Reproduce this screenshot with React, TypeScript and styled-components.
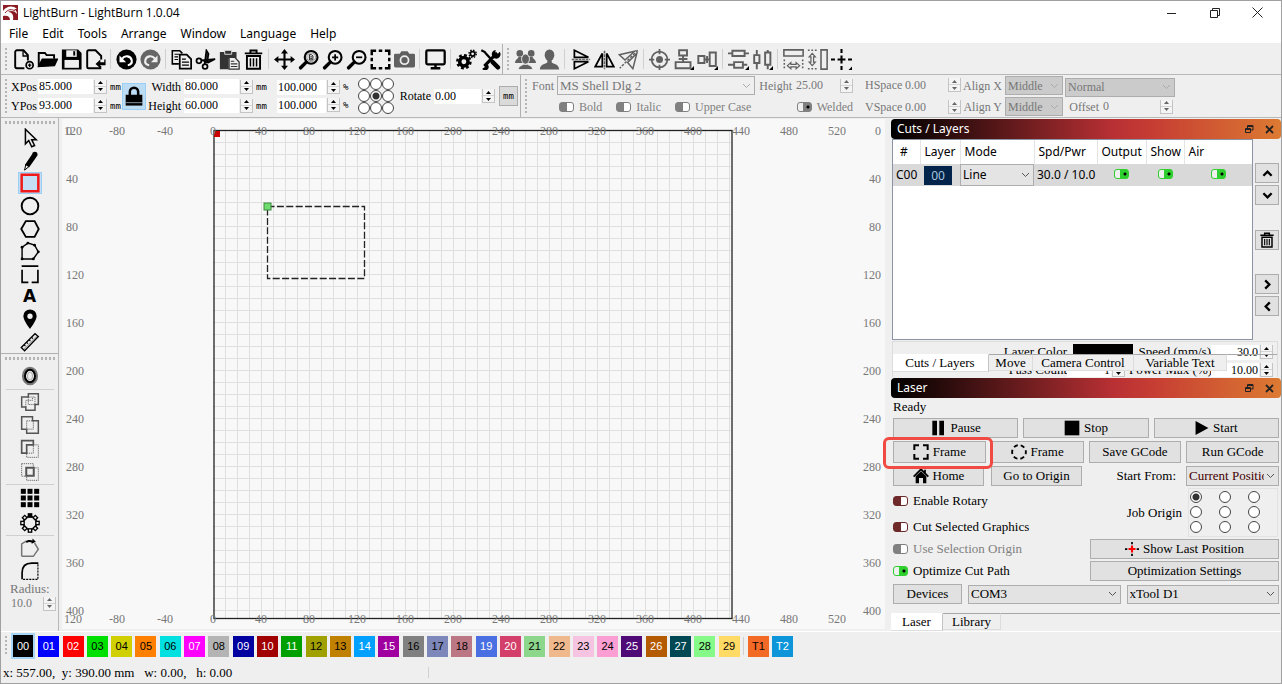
import React from "react";
import styled, { createGlobalStyle, css } from "styled-components";

const UI = `"Noto Sans", "Open Sans", sans-serif`;
const SONG = `"Liberation Serif", "Noto Sans CJK SC", serif`;

const Global = createGlobalStyle`
  * { box-sizing: border-box; }
  body { margin: 0; background: #f0f0f0; color: #000; font: 13px/16px ${SONG}; }
  button, input, select { font: inherit; color: inherit; margin: 0; padding: 0; }
  svg { display: block; }
`;

/* ---------- shell ---------- */

const Window = styled.div`
  min-height: 100vh;
  display: flex;
  flex-direction: column;
  border: 1px solid #a0a0a0;
  background: #efefef;
`;

const TitleBar = styled.header`
  display: flex;
  align-items: center;
  height: 23px;
  padding: 0 2px;
  background: #fff;
`;

const AppTitle = styled.h1`
  flex: 1;
  margin: 0 0 0 5px;
  font: 12px/16px "Open Sans", "Noto Sans", sans-serif;
`;

const CaptionButton = styled.button`
  width: 43px;
  height: 20px;
  display: grid;
  place-items: center;
  border: 0;
  background: none;
`;

const MenuBar = styled.nav`
  display: flex;
  gap: 14px;
  height: 20px;
  padding: 0 8px;
  background: #fff;
  border-bottom: 1px solid #eee;
  font: 12px/20px ${UI};
`;

const MenuLink = styled.a`
  color: #000;
  text-decoration: none;
`;

const ToolRow = styled.div`
  display: flex;
  align-items: center;
  height: 31px;
  border-bottom: 1px solid #b8b8b8;
`;

const Handle = styled.span<{ $flat?: boolean }>`
  flex: none;
  ${(p) =>
    p.$flat
      ? css`
          height: 3px;
          margin: 3px 3px 3px 4px;
          background: repeating-linear-gradient(90deg, #b4b4b4 0 2px, transparent 2px 4px);
        `
      : css`
          width: 2px;
          align-self: stretch;
          margin: 4px;
          background: repeating-linear-gradient(180deg, #b4b4b4 0 2px, transparent 2px 4px);
        `}
`;

const ToolButton = styled.button`
  flex: none;
  width: 24px;
  height: 26px;
  display: grid;
  place-items: center;
  border: 0;
  background: none;
`;

const VRule = styled.span<{ $strong?: boolean }>`
  flex: none;
  width: 1px;
  align-self: stretch;
  margin: ${(p) => (p.$strong ? "0" : "5px 3px")};
  background: ${(p) => (p.$strong ? "#b0b0b0" : "#d0d0d0")};
`;

/* ---------- small controls ---------- */

const Field = styled.label<{ $dim?: boolean }>`
  display: flex;
  align-items: center;
  color: ${(p) => (p.$dim ? "#777" : "#000")};
`;

const FieldName = styled.span<{ $w?: number }>`
  width: ${(p) => (p.$w ? `${p.$w}px` : "auto")};
  text-align: right;
  margin-right: 3px;
  white-space: nowrap;
`;

const NumberBox = styled.input<{ $w: number; $plain?: boolean; $right?: boolean }>`
  width: ${(p) => p.$w}px;
  height: 15px;
  border: 0;
  padding: 0 1px;
  text-align: ${(p) => (p.$right ? "right" : "left")};
  background: ${(p) => (p.$plain ? "transparent" : "#fff")};
  font: 12px/15px ${SONG};
`;

const SpinBox = styled.span`
  flex: none;
  width: 13px;
  height: 14px;
  margin-left: 1px;
  display: flex;
  flex-direction: column;
  border: solid #c4c4c4;
  border-width: 0 1px 1px;
  background: #f4f4f4;
`;

const SpinHalf = styled.button`
  flex: 1;
  display: grid;
  place-items: center;
  border: 0;
  background: none;
  &:first-child { border-bottom: 1px solid #d4d4d4; }
`;

const Unit = styled.span`
  width: 12px;
  margin-left: 3px;
  font: 9px/14px "DejaVu Sans Mono", monospace;
`;

function Spin({ dim }: { dim?: boolean }) {
  const c = dim ? "#666" : "#000";
  return (
    <SpinBox>
      <SpinHalf type="button" aria-label="Increase">
        <svg width="5" height="3"><path d="M2.5 0L5 3H0z" fill={c} /></svg>
      </SpinHalf>
      <SpinHalf type="button" aria-label="Decrease">
        <svg width="5" height="3"><path d="M0 0h5L2.5 3z" fill={c} /></svg>
      </SpinHalf>
    </SpinBox>
  );
}

function NumberField(p: { label: string; value: string; w: number; nameW?: number; unit?: string; dim?: boolean; hideLabel?: boolean }) {
  return (
    <Field $dim={p.dim}>
      {!p.hideLabel && <FieldName $w={p.nameW}>{p.label}</FieldName>}
      <NumberBox $w={p.w} $plain={p.dim} defaultValue={p.value} aria-label={p.label} />
      <Spin dim={p.dim} />
      {p.unit && <Unit>{p.unit}</Unit>}
    </Field>
  );
}

const SelectShell = styled.span<{ $w?: number; $ui?: boolean }>`
  position: relative;
  display: block;
  width: ${(p) => (p.$w ? `${p.$w}px` : "auto")};
  min-width: 0;
  font-family: ${(p) => (p.$ui ? UI : SONG)};
  > svg { position: absolute; right: 4px; top: 50%; margin-top: -3px; pointer-events: none; }
`;

const SelectBox = styled.select<{ $bg?: string; $h?: number; $color?: string; $small?: boolean }>`
  appearance: none;
  width: 100%;
  height: ${(p) => p.$h ?? 19}px;
  padding: 0 14px 0 2px;
  border: 1px solid #adadad;
  border-radius: 0;
  background: ${(p) => p.$bg ?? "#e3e3e3"};
  color: ${(p) => p.$color ?? "#000"};
  font-size: ${(p) => (p.$small ? 12 : 13)}px;
  display: block;
`;

function Select(p: { label: string; value: string; w?: number; bg?: string; h?: number; color?: string; ui?: boolean; small?: boolean }) {
  return (
    <SelectShell $w={p.w} $ui={p.ui}>
      <SelectBox aria-label={p.label} $bg={p.bg} $h={p.h} $color={p.color} $small={p.ui || p.small}>
        <option>{p.value}</option>
      </SelectBox>
      <svg width="9" height="6"><path d="M1 1l3.5 3.5L8 1" fill="none" stroke={p.color === "#777" ? "#aaa" : "#555"} /></svg>
    </SelectShell>
  );
}

const Switch = styled.input<{ $c: string }>`
  appearance: none;
  flex: none;
  width: 15px;
  height: 10px;
  border: 1px solid ${(p) => p.$c};
  border-radius: 3px;
  background: linear-gradient(90deg, ${(p) => p.$c} 0 55%, #fff 55%);
  &:checked {
    background: radial-gradient(circle at 10px 4px, #000 0 1px, transparent 2px),
      linear-gradient(90deg, #efefef 0 40%, ${(p) => p.$c} 40%);
  }
`;

const SwitchLabel = styled.label<{ $dim?: boolean }>`
  display: flex;
  align-items: center;
  gap: 5px;
  white-space: nowrap;
  color: ${(p) => (p.$dim ? "#808080" : "#000")};
`;

const Radio = styled.input`
  appearance: none;
  width: 12px;
  height: 12px;
  border: 1px solid #444;
  border-radius: 50%;
  background: #fff;
  &:checked { background: radial-gradient(circle, #333 0 3px, #fff 4px); }
`;

const RadioGrid = styled.div<{ $gap?: number; $row?: number; $ml?: number }>`
  display: grid;
  grid-template-columns: repeat(3, 12px);
  gap: ${(p) => p.$row ?? 0}px ${(p) => p.$gap ?? 0}px;
  margin-left: ${(p) => p.$ml ?? 0}px;
`;

/* ---------- numeric toolbar ---------- */

const NumericRow = styled.div`
  display: flex;
  align-items: stretch;
  height: 43px;
  border-bottom: 1px solid #b8b8b8;
`;

const Cluster = styled.div`
  display: flex;
  align-items: center;
`;

const Pair = styled.div<{ $ml?: number; $gap?: number }>`
  display: grid;
  gap: ${(p) => p.$gap ?? 3}px;
  margin-left: ${(p) => p.$ml ?? 0}px;
`;

const LockButton = styled.button`
  width: 24px;
  height: 27px;
  display: grid;
  place-items: center;
  border: 1px solid #99cff5;
  background: #bcdcf4;
`;

const UnitButton = styled.button`
  width: 19px;
  height: 20px;
  margin: 0 2px 0 4px;
  border: 1px solid #adadad;
  background: #dadada;
  font: 9px/14px "DejaVu Sans Mono", monospace;
`;

const SwitchRow = styled.div`
  display: flex;
  align-items: center;
  height: 19px;
  gap: 14px;
  padding-left: 28px;
  > :last-child { margin-left: auto; }
`;

/* ---------- body ---------- */

const Body = styled.div`
  flex: 1;
  display: flex;
  min-height: 512px;
`;

const SideTools = styled.aside`
  flex: none;
  width: 58px;
  display: flex;
  flex-direction: column;
  border-right: 1px solid #b8b8b8;
`;

const ToolStack = styled.div<{ $h: number }>`
  display: grid;
  grid-auto-rows: 1fr;
  height: ${(p) => p.$h}px;
  justify-items: center;
  align-items: center;
`;

const SideButton = styled.button<{ $on?: boolean }>`
  width: 24px;
  height: 22px;
  display: grid;
  place-items: center;
  border: ${(p) => (p.$on ? "1px solid #99cff5" : "0")};
  background: ${(p) => (p.$on ? "#c4dff5" : "none")};
`;

const HRule = styled.hr<{ $full?: boolean }>`
  width: ${(p) => (p.$full ? "100%" : "48px")};
  margin: 0 auto;
  border: 0;
  border-top: 1px solid ${(p) => (p.$full ? "#b0b0b0" : "#cfcfcf")};
`;

const RadiusBlock = styled.div`
  padding: 0 2px 0 9px;
  color: #777;
  line-height: 14px;
`;

const Stage = styled.main`
  flex: 1;
  min-width: 0;
  padding: 1px 0 0 3px;
  svg { background: #f8f8f8; }
  text { font: 12px ${SONG}; fill: #777; }
`;

const Dock = styled.section`
  flex: none;
  width: 396px;
  padding: 1px 1px 0 6px;
  display: flex;
  flex-direction: column;
`;

const DockTitle = styled.h2`
  display: flex;
  align-items: center;
  gap: 8px;
  height: 20px;
  margin: 0 -1px 0 0;
  padding: 0 6px;
  border-radius: 4px;
  color: #fff;
  background: linear-gradient(90deg, #000 0, #240a0a 12%, #b83034 57%, #c63d33 67%, #dc7a32 100%);
  font: 12px/20px ${UI};
  > span { flex: 1; }
`;

const BarButton = styled.button`
  width: 12px;
  height: 12px;
  display: grid;
  place-items: center;
  border: 0;
  background: none;
`;

const CutsArea = styled.div`
  display: flex;
  gap: 2px;
  padding-left: 1px;
`;

const TableFrame = styled.div`
  width: 361px;
  height: 201px;
  border: 1px solid #8a94a4;
  background: #fff;
`;

const CutTable = styled.table`
  width: 100%;
  border-collapse: collapse;
  table-layout: fixed;
  font: 12px/16px ${UI};
  th {
    height: 24px;
    padding: 0 0 0 4px;
    font-weight: 400;
    text-align: left;
    border-right: 1px solid #e4e4e4;
  }
  th:last-child { border-right: 0; }
  td { height: 22px; padding: 0 0 0 3px; background: #d9d9d9; white-space: nowrap; }
`;

const Cell = styled.td<{ $flush?: boolean; $mid?: boolean }>`
  && { padding: ${(p) => (p.$flush || p.$mid ? "0" : "0 0 0 3px")}; }
  text-align: ${(p) => (p.$mid ? "center" : "left")};
`;

const LayerChip = styled.button`
  display: block;
  width: 28px;
  height: 19px;
  margin-left: 4px;
  border: 0;
  background: #03244a;
  color: #a8c4dc;
  font: 12px/17px ${UI};
`;

const SideStack = styled.div`
  display: flex;
  flex-direction: column;
  gap: 2px;
  padding-top: 24px;
`;

const SquareButton = styled.button<{ $top?: number }>`
  width: 24px;
  height: 20px;
  margin-top: ${(p) => p.$top ?? 0}px;
  display: grid;
  place-items: center;
  border: 1px solid #adadad;
  background: #e1e1e1;
`;

const LayerSettings = styled.div`
  position: relative;
  height: 36px;
  margin: 1px 2px 1px 1px;
  border: 1px solid #dcdcdc;
  border-bottom: 0;
  overflow: hidden;
`;

const SettingsGrid = styled.div`
  display: grid;
  grid-template-columns: 174px 62px 82px auto;
  row-gap: 2px;
  padding-top: 2px;
  text-align: right;
  > * { height: 16px; white-space: nowrap; }
`;

const ColorBar = styled.button`
  width: 60px;
  margin-left: 6px;
  border: 0;
  background: #000;
`;

const TabStrip = styled.div<{ $over?: boolean }>`
  display: flex;
  align-items: flex-start;
  ${(p) => p.$over && css`position: absolute; left: -1px; right: 0; top: 12px;`}
`;

const BottomTabs = styled(TabStrip)`
  margin: 9px 0 0;
`;

const Tab = styled.button<{ $active?: boolean; $w: number }>`
  flex: none;
  width: ${(p) => p.$w}px;
  height: ${(p) => (p.$active ? 18 : 17)}px;
  border: 0;
  border-right: 1px solid ${(p) => (p.$active ? "#c4c4c4" : "#dcdcdc")};
  border-top: 1px solid ${(p) => (p.$active ? "#fff" : "#a8a8a8")};
  border-bottom: 1px solid #ddd;
  background: ${(p) => (p.$active ? "#fff" : "#efefef")};
  white-space: nowrap;
`;

const TabLine = styled.span`
  flex: 1;
  border-top: 1px solid #a8a8a8;
`;

const LaserBody = styled.div`
  padding: 0 1px 0 2px;
`;

const Ready = styled.p`
  margin: 1px 0 3px;
  line-height: 16px;
`;

const ButtonRow = styled.div<{ $cols: string; $mt?: number; $gap?: number }>`
  display: grid;
  grid-template-columns: ${(p) => p.$cols};
  gap: ${(p) => p.$gap ?? 5}px;
  margin-top: ${(p) => p.$mt ?? 3}px;
  align-items: center;
`;

const PushButton = styled.button<{ $h?: number }>`
  height: ${(p) => p.$h ?? 20}px;
  display: flex;
  align-items: center;
  justify-content: center;
  gap: 4px;
  border: 1px solid #adadad;
  background: #e1e1e1;
  white-space: nowrap;
`;

const Marked = styled.div`
  position: relative;
  display: grid;
  &::after {
    content: "";
    position: absolute;
    inset: -4px -7px -6px -10px;
    border: 3px solid #f14a42;
    border-radius: 6px;
    pointer-events: none;
  }
`;

const Options = styled.div`
  display: grid;
  grid-template-columns: 197px 1fr;
  height: 95px;
`;

const SwitchColumn = styled.div`
  display: grid;
  grid-template-rows: 30px 22px 22px 22px;
`;

const OriginColumn = styled.div`
  display: flex;
  flex-direction: column;
  gap: 2px;
  padding-top: 2px;
`;

const OriginRow = styled.div`
  display: flex;
  align-items: center;
  justify-content: flex-end;
  gap: 6px;
  padding-right: 1px;
`;

const OriginFrame = styled.div`
  width: 90px;
  height: 49px;
  padding: 2px 0 0 1px;
  border: 1px solid #e2e2e2;
`;

/* ---------- bottom ---------- */

const Palette = styled.footer`
  display: flex;
  align-items: center;
  height: 29px;
  border-top: 1px solid #fff;
`;

const Swatches = styled.div`
  display: flex;
  align-items: center;
  justify-content: space-between;
  width: 729px;
`;

const Swatch = styled.button<{ $bg: string; $light?: boolean; $on?: boolean }>`
  flex: none;
  width: ${(p) => (p.$on ? 24 : 21)}px;
  height: ${(p) => (p.$on ? 26 : 21)}px;
  border: ${(p) => (p.$on ? "2px solid #a8d4f6" : "0")};
  background: ${(p) => p.$bg};
  color: ${(p) => (p.$light ? "#fff" : "#000")};
  font: 11px/16px "Liberation Sans", Arial, sans-serif;
`;

const TemplateSwatches = styled.div`
  display: flex;
  gap: 3px;
  margin-left: 1px;
`;

const StatusBar = styled.div`
  display: flex;
  height: 23px;
  align-items: center;
  white-space: pre;
  padding-top: 2px;
  line-height: 18px;
`;

const StatusText = styled.output`
  width: 424px;
  padding-left: 2px;
`;

/* ---------- icons, all on a 24 unit square ---------- */

const G = "#606060";
const I = ({ children, s = 24 }: { children: React.ReactNode; s?: number }) => (
  <svg width={s} height={s} viewBox="0 0 24 24" fill="none" stroke="#000" strokeWidth="2" aria-hidden="true">
    {children}
  </svg>
);

const zoomGlass = (
  <>
    <circle cx="15" cy="9.5" r="7.3" strokeWidth="2.4" />
    <path d="M9.5 15L3 21.5" strokeWidth="4" strokeLinecap="round" />
  </>
);

const icons: Record<string, React.ReactNode> = {
  newFile: <><path d="M13 22H4.500a2 2 0 0 1-2-2V3.500a2 2 0 0 1 2-2H12l5 5.500V13" strokeWidth="2.200" /><path d="M11.500 2v6h5" strokeWidth="1.500" /><circle cx="19" cy="18.500" r="4" /><path d="M19 16.500v4M17 18.500h4" strokeWidth="1.500" /></>,
  open: <><path d="M2 19V4.500h7L11 7h8.500v4" strokeWidth="2.200" /><path d="M1.500 20L6 11.500h17.500L20 19z" fill="#000" strokeWidth="1.400" /></>,
  save: <><path d="M1 .5h18.500L23.500 4.500V23.500H1z" fill="#000" stroke="none" /><path d="M6 1.500h12v7.500H6z" fill="#efefef" stroke="none" /><path d="M14 2.500h2.200v5H14z" fill="#000" stroke="none" /><path d="M4 12.500h16.500v9H4z" fill="#efefef" stroke="none" /></>,
  importFile: <><path d="M18.500 12V8L12 1.500H4A1.500 1.500 0 0 0 2.500 3v17.500A1.500 1.500 0 0 0 4 22h13.500v-2.500" strokeWidth="2.200" /><path d="M12 17l5.500-5v3.200H22V12h1.500v6.500h-6V22z" fill="#000" stroke="none" /></>,
  undo: <><circle cx="12" cy="12" r="11.500" fill="#000" stroke="none" /><path d="M7 11c3-4 10-3.500 11 2 .5 3-1.500 5-4.500 5.500" stroke="#fff" strokeWidth="2.400" /><path d="M4 7.500V15h7.500z" fill="#fff" stroke="none" /></>,
  redo: <><circle cx="12" cy="12" r="11.500" fill="#666" stroke="none" /><path d="M17 11c-3-4-10-3.500-11 2-.5 3 1.500 5 4.500 5.500" stroke="#efefef" strokeWidth="2.400" /><path d="M20 7.500V15h-7.500z" fill="#efefef" stroke="none" /></>,
  copy: <><path d="M9 17H1.500V2H10l3 3" strokeWidth="1.800" /><path d="M4 6h5M4 9h4M4 12h4" strokeWidth="1.400" /><path d="M10 6.500h8l5 5V22.500H10z" strokeWidth="2" fill="#efefef" /><path d="M12.500 11.500H17M12.500 15h8M12.500 18.500h8" strokeWidth="1.500" /></>,
  cut: <><circle cx="4.500" cy="13.500" r="2.800" /><circle cx="11.500" cy="20" r="2.800" /><path d="M7.500 13L23 11.500l-8 4-5-1.500M11 17.500L13 1.500l2.500 4-1.500 8.500" strokeWidth="1.800" fill="#333" /></>,
  paste: <><path d="M1 3.500h19v7h-9V23H1z" fill="#333" stroke="none" /><path d="M6.500 1.500h8V6h-8z" fill="#333" stroke="#efefef" strokeWidth="1" /><path d="M11.500 9.500H18l5 5.500v8H11.500z" fill="#efefef" stroke="#333" strokeWidth="1.500" /><path d="M13.500 14h4M13.500 17h7.500M13.500 20h7.500" stroke="#333" strokeWidth="1.400" /></>,
  trash: <><path d="M2 5h20M8.500 4.500V1.800h7v2.700" strokeWidth="2.200" /><path d="M4.500 8h15v14.500h-15z" strokeWidth="2.200" /><path d="M8.500 10.500v9.500M12 10.500v9.500M15.500 10.500v9.500" strokeWidth="1.700" /></>,
  move: <><path d="M12 3v18M3 12h18" strokeWidth="2.400" /><path d="M12 0l4 5H8zM12 24l4-5H8zM0 12l5-4v8zM24 12l-5-4v8z" fill="#000" stroke="none" /></>,
  zoomPage: <>{zoomGlass}<circle cx="15" cy="9.500" r="5" stroke="#888" strokeWidth="1" /><path d="M13 6.500h2.500L17 8v4.500h-4zM14 9h2M14 11h2" strokeWidth="1" /></>,
  zoomIn: <>{zoomGlass}<path d="M15 6v7M11.500 9.500h7" /></>,
  zoomOut: <>{zoomGlass}<path d="M11.500 9.500h7" /></>,
  marquee: <path d="M2 7V2h5M10 2h4M17 2h5v5M22 10v4M22 17v5h-5M14 22h-4M7 22H2v-5M2 14v-4" strokeWidth="2.800" />,
  camera: <><path d="M1.500 5.500H6.500l2-3h7l2 3h5a1.500 1.500 0 0 1 1.500 1.500v12.500a1.500 1.500 0 0 1-1.500 1.500h-21A1.500 1.500 0 0 1 0 19.500V7a1.500 1.500 0 0 1 1.500-1.500z" fill={G} stroke="none" /><circle cx="12" cy="12.800" r="4.600" stroke="#efefef" strokeWidth="2" /></>,
  monitor: <><rect x="1.500" y="1.500" width="21" height="16" rx="1.500" strokeWidth="2.600" /><path d="M12 17v4M6.500 22h11" strokeWidth="2.800" /></>,
  gears: <><circle cx="9" cy="14.500" r="4.800" strokeWidth="4" /><circle cx="9" cy="14.500" r="7.500" strokeWidth="2.800" strokeDasharray="3.200 2.690" /><circle cx="19" cy="5.500" r="2.600" strokeWidth="2" /><circle cx="19" cy="5.500" r="4.200" strokeWidth="1.500" strokeDasharray="1.700 1.599" /></>,
  tools: <><path d="M19.500 4.500L5 19.500" strokeWidth="3.600" /><path d="M22.500 3a5 5 0 1 1-4.500-2L17 5l2 2z M6.500 16.500a4 4 0 1 1-4 6L5 21z" fill="#000" stroke="none" /><path d="M1.500 1.500l4 2 1.500 2L13 12" strokeWidth="2.600" /><path d="M14.500 15l6 6" strokeWidth="5" strokeLinecap="round" /></>,
  users: <g fill={G} stroke="none"><circle cx="5.500" cy="5" r="3.800" /><circle cx="18.500" cy="5" r="3.800" /><path d="M0 16c0-4 3-4.500 4-7h4l4 7zM24 16c0-4-3-4.500-4-7h-4l-4 7z" /><g stroke="#efefef" strokeWidth="1"><path d="M4 23.500c0-4.500 4-4.500 5.500-6h5c1.500 1.500 5.500 1.500 5.500 6z" /><ellipse cx="12" cy="11.500" rx="4.500" ry="5.800" /></g></g>,
  user: <g fill={G} stroke="none"><ellipse cx="12" cy="7" rx="5.500" ry="6.500" /><path d="M9.500 11h5v4.500c2 1.500 8.500 2 8.500 8H1c0-6 6.500-6.500 8.500-8z" /></g>,
  flipV: <><path d="M5 1.500v8H21zM5 14.500v8L21 14.500z" strokeWidth="2" /><path d="M2 12h21" stroke={G} strokeWidth="1.800" strokeDasharray="3 1" /></>,
  flipH: <><path d="M9.500 5v15H1.500zM14.500 5v15h8z" strokeWidth="2" /><path d="M12 2v21" stroke={G} strokeWidth="1.800" strokeDasharray="3 1" /></>,
  mirror: <g stroke={G} strokeWidth="1.700"><path d="M19 2.500L1.500 6.500l6.500 6zM21.500 5L11 15.500l6 7z" /><path d="M22.500 1.500L2 22" strokeDasharray="3 1.500" /></g>,
  target: <g stroke={G} strokeWidth="2"><circle cx="12" cy="12" r="9" /><circle cx="12" cy="12" r="4" fill={G} stroke="none" /><path d="M12 0v6M12 18v6M0 12h6M18 12h6" /></g>,
  alignV: <g stroke={G} strokeWidth="2.200"><path d="M7 1.500h9v6H7zM3 15h17v7H3zM11.500 7.500V15M6.500 11.500h10" /><path d="M24 19.500V24h-4.500z" fill="#000" stroke="none" /></g>,
  alignH: <g stroke={G} strokeWidth="2.200"><path d="M1.500 8h7v8h-7zM14.500 4h7v15.500h-7zM8.500 12h6M11.500 8v8" /><path d="M24 19.500V24h-4.500z" fill="#000" stroke="none" /></g>,
  distV: <g stroke={G} strokeWidth="2.200"><path d="M0 5h5M19 5h5M5 2h14v6H5zM0 18h7M17 18h5M7 15h10v6.500H7z" /><path d="M24 19.500V24h-4.500z" fill="#000" stroke="none" /></g>,
  distH: <g stroke={G} strokeWidth="2.200"><path d="M5.500 1v6M5.500 16v7M2.500 7h6v9h-6zM18 1v3M18 18v5M15 4h6v14h-6z" /><path d="M24 19.500V24h-4.500z" fill="#000" stroke="none" /></g>,
  sameW: <g stroke={G} strokeWidth="1.800"><path d="M1 1h22v7H1z" /><path d="M1.500 12v11M22.500 12v11" strokeDasharray="2 2" /><path d="M5 19l4-3.500v2h6v-2l4 3.500-4 3.500v-2H9v2z" strokeWidth="1.400" /></g>,
  sameH: <g stroke={G} strokeWidth="1.800"><path d="M16 1h7v22h-7z" /><path d="M1 1.500h10M1 22.500h10" strokeDasharray="2 2" /><path d="M6 5L2.500 9h2v6h-2L6 19l3.500-4h-2V9h2z" strokeWidth="1.400" /></g>,
  dotCross: <><path d="M12 0v4.500M12 7.500v9M12 19.500V24M0 12h4.500M7.500 12h9M19.500 12H24" strokeWidth="2.400" /><path d="M24 20v4h-4z" fill="#000" stroke="none" /></>,
  pointer: <path d="M6.500 1.500v17.500l4-4 3.500 7.500 3.500-1.500L14 14h5.500z" strokeWidth="1.800" />,
  pencil: <><path d="M14.500 4l5 3.500-8.500 12-5-3z" fill="#000" stroke="none" /><circle cx="17.800" cy="4.200" r="3.200" fill="#000" stroke="none" /><path d="M7 16l-1.500 7 5.500-4.500" strokeWidth="1.200" /></>,
  square: <path d="M2 2h20v20H2z" stroke="#f01818" strokeWidth="3" />,
  circle: <circle cx="12" cy="12" r="10" strokeWidth="2.300" />,
  hexagon: <path d="M1.500 12L7 2.500h10.500L22.500 12l-5 9.500H7z" strokeWidth="2.200" />,
  polygon: <><path d="M2.500 21.500V7.500L9.500 2.500l8 2.500 4.500 8-6 8.500z" strokeWidth="1.700" /><g fill="#000" stroke="none"><circle cx="2.500" cy="7.500" r="1.700" /><circle cx="9.500" cy="2.500" r="1.700" /><circle cx="17.500" cy="5" r="1.700" /><circle cx="22" cy="13" r="1.700" /><circle cx="16" cy="21.500" r="1.700" /><circle cx="2.500" cy="21.500" r="1.700" /></g></>,
  tabs: <path d="M2 2.500h20M2.500 7v15H10M21.500 7v15H14" strokeWidth="2" />,
  pin: <path fillRule="evenodd" d="M12 .5A8 8 0 0 0 4 8.500C4 14 12 24 12 24s8-10 8-15.500A8 8 0 0 0 12 .5zm0 5a3.200 3.200 0 1 1 0 6.400 3.200 3.200 0 0 1 0-6.400z" fill="#000" stroke="none" />,
  ruler: <><path d="M1.500 18.500L18 2l4 3.500L5.500 22.500z" strokeWidth="1.600" /><path d="M5 15.500l1.500 1.500M8 12.500l1.500 1.500M11 9.500l1.500 1.500M14 6.500l1.500 1.500" strokeWidth="1.300" /><path d="M4.500 20.500L20.500 4.500" stroke="#888" strokeWidth="1" /></>,
  offset: <><ellipse cx="12" cy="12" rx="7.500" ry="9" stroke="#777" strokeWidth="4.400" /><ellipse cx="12" cy="12" rx="6" ry="7.500" strokeWidth="2.400" /><ellipse cx="12" cy="12" rx="3" ry="4.800" fill="#efefef" stroke="#999" strokeWidth="1" /></>,
  weld: <g stroke="#555" strokeWidth="1.800"><path d="M10 2h12v13h-4v7H7v-4H2V6h8z" /><path d="M10 6h8v9M7 18V10h8v-4M10 6v9h8" strokeWidth="1" strokeDasharray="1.500 1" /></g>,
  union: <g stroke="#555" strokeWidth="1.800"><path d="M2 2h13v5h7v15H8v-5H2z" /><path d="M8 7h8v10H8z" strokeWidth="1" strokeDasharray="1.500 1" /></g>,
  subtract: <g stroke="#555"><path d="M2 2h14v5H8v10H2z" /><path d="M16 7h6v15H8v-5h8z" strokeWidth="1" strokeDasharray="1.500 1" /></g>,
  intersect: <g stroke="#555"><path d="M2 2h14v5M2 2v15h6M16 7h6v15H8v-5" strokeWidth="1" strokeDasharray="1.500 1" /><path d="M7.500 7h9v9.500h-9z" strokeWidth="2.400" /></g>,
  grid9: <g fill="#000" stroke="none">{[1, 9, 17].map((y) => [1, 9, 17].map((x) => <rect key={`${x}-${y}`} x={x} y={y} width="6" height="6" />))}</g>,
  ring: <g strokeWidth="1.600" fill="#efefef"><circle cx="12" cy="12" r="8" />{[0, 45, 90, 135, 180, 225, 270, 315].map((a) => <rect key={a} x="10" y="1" width="4" height="4" fill={a === 0 ? "#000" : "#efefef"} transform={`rotate(${a} 12 12)`} />)}</g>,
  nodeEdit: <><path d="M2 22V7l6-3.500M17.500 6l4.500 7.500L16 22H2" stroke="#777" strokeWidth="1.800" /><path d="M7 4c2-2 6-2 8-1V.5l4 4-5 2.500V5.500C12 4.500 10 4.500 8 6z" fill="#000" stroke="none" /></>,
  fillet: <><path d="M2.500 22V14C2.500 6.500 7 2.500 14 2.500h8" /><path d="M21.500 4v18H3.500" strokeWidth="1.400" strokeDasharray="2.500 1.200" /></>,
  lock: <><path d="M7 11V7a5 5 0 0 1 10 0v4" strokeWidth="3" /><path d="M2 10.500h20v13H2z" fill="#000" stroke="none" /><path d="M2 20h20" stroke="#bcdcf4" strokeWidth=".8" /></>,
  pause: <path d="M3.500 1h7v22h-7zM14 1h7v22h-7z" fill="#000" stroke="none" />,
  stop: <path d="M1 1h22v22H1z" fill="#000" stroke="none" />,
  play: <path d="M1 0l22 12L1 24z" fill="#000" stroke="none" />,
  frameRect: <path d="M2 9V2h7M15 2h7v7M22 15v7h-7M9 22H2v-7" strokeWidth="3" />,
  frameCircle: <circle cx="12" cy="12" r="10.300" strokeWidth="2.800" strokeDasharray="6.300 4.486" strokeDashoffset="3.100" />,
  home: <><path d="M1 13L12 2 23 13M18 2.500V9" strokeWidth="2.600" /><path d="M4 12.500L12 5l8 7.500V23h-5v-8H9v8H4z" fill="#000" stroke="none" /></>,
  lastPos: <><path d="M12 0v4M12 20v4M0 12h4M20 12h4" strokeWidth="3" /><path d="M12 6v12M6 12h12" stroke="#f00" strokeWidth="3.600" /></>,
  up: <path d="M3 17l9-9 9 9" strokeWidth="5" />,
  down: <path d="M3 7l9 9 9-9" strokeWidth="5" />,
  right: <path d="M7 3l9 9-9 9" strokeWidth="5" />,
  left: <path d="M17 3l-9 9 9 9" strokeWidth="5" />,
};

const LetterA = styled.span`
  font: 900 17px/18px "DejaVu Sans", sans-serif;
`;

type Item = [string, string] | null;

const mainTools: Item[] = [
  ["newFile", "New"], ["open", "Open"], ["save", "Save"], ["importFile", "Import"], null,
  ["undo", "Undo"], ["redo", "Redo"], null,
  ["copy", "Copy"], ["cut", "Cut"], ["paste", "Paste"], ["trash", "Delete"], null,
  ["move", "Pan"], ["zoomPage", "Zoom to page"], ["zoomIn", "Zoom in"], ["zoomOut", "Zoom out"], ["marquee", "Frame selection"], ["camera", "Camera"], null,
  ["monitor", "Preview"], null,
  ["gears", "Settings"], ["tools", "Device settings"],
];
const arrangeTools: Item[] = [
  ["users", "Group"], ["user", "Ungroup"], null,
  ["flipV", "Flip vertical"], ["flipH", "Flip horizontal"], ["mirror", "Mirror"], null,
  ["target", "Focus"], ["alignV", "Align vertical"], ["alignH", "Align horizontal"], null,
  ["distV", "Distribute vertical"], ["distH", "Distribute horizontal"], null,
  ["sameW", "Same width"], ["sameH", "Same height"], ["dotCross", "Move to position"],
];
const drawTools: [string, string][] = [
  ["pointer", "Select"], ["pencil", "Draw lines"], ["square", "Rectangle"], ["circle", "Ellipse"], ["hexagon", "Polygon"],
  ["polygon", "Edit nodes"], ["tabs", "Tabs"], ["text", "Text"], ["pin", "Position"], ["ruler", "Measure"],
];

const ToolList = ({ items }: { items: Item[] }) => (
  <>
    {items.map((t, i) =>
      t ? (
        <ToolButton key={i} type="button" aria-label={t[1]}><I s={21}>{icons[t[0]]}</I></ToolButton>
      ) : (
        <VRule key={i} />
      )
    )}
  </>
);

const SideList = ({ items, h, active }: { items: [string, string][]; h: number; active?: string }) => (
  <ToolStack $h={h}>
    {items.map(([id, name]) => (
      <SideButton key={id} type="button" aria-label={name} $on={id === active}>
        {id === "text" ? <LetterA>A</LetterA> : <I s={20}>{icons[id]}</I>}
      </SideButton>
    ))}
  </ToolStack>
);

/* ---------- work area ---------- */

const OX = 151, OY = 12, STEP = 12, BED_W = 518, BED_H = 487;
const rulerX = Array.from({ length: 16 }, (_, i) => (i - 2) * 40);
const rulerY = Array.from({ length: 11 }, (_, i) => i * 40);

function WorkArea() {
  return (
    <svg width="100%" height="510" role="img" aria-label="Work area">
      <g stroke="#dfdfdf" shapeRendering="crispEdges">
        {Array.from({ length: 43 }, (_, i) => (
          <line key={i} x1={OX + STEP * (i + 1) + 0.5} x2={OX + STEP * (i + 1) + 0.5} y1={OY} y2={OY + BED_H} />
        ))}
        {Array.from({ length: 40 }, (_, i) => (
          <line key={i} y1={OY + STEP * (i + 1) - 0.5} y2={OY + STEP * (i + 1) - 0.5} x1={OX} x2={OX + BED_W} />
        ))}
      </g>
      <rect x={OX + 1} y={OY - 0.5} width={BED_W} height={BED_H + 1} fill="none" stroke="#222" strokeWidth="1.300" />
      <rect x={OX + 1} y={OY} width="6" height="6" fill="#c00" />
      <rect x="205.500" y="87.500" width="97" height="72" fill="none" stroke="#222" strokeWidth="1.300" strokeDasharray="7 2.400" />
      <rect x="202" y="84" width="7" height="7" fill="#6fdc6f" stroke="#3a8a3a" />
      {[OY, OY + BED_H + 1].map((y) => (
        <g key={y} textAnchor="middle">
          <text x="11" y={y + 4}>120</text>
          {rulerX.map((v) => <text key={v} x={OX + v * 1.2} y={y + 4}>{v}</text>)}
        </g>
      ))}
      {rulerY.map((v) => (
        <React.Fragment key={v}>
          <text x="4" y={OY + v * 1.2 + 4}>{v}</text>
          <text x="100%" dx="-4" textAnchor="end" y={OY + v * 1.2 + 4}>{v}</text>
        </React.Fragment>
      ))}
    </svg>
  );
}

/* ---------- docks ---------- */

const TitleButtons = () => (
  <>
    <BarButton type="button" aria-label="Float">
      <svg width="9" height="9" fill="none" stroke="#222"><path d="M.5 3.500h5v4h-5zM2.500 3V.500h5.500v4.500H6M.5 4.500h5M2.500 1.500H8" /></svg>
    </BarButton>
    <BarButton type="button" aria-label="Close">
      <svg width="9" height="9"><path d="M1 1l7 7M8 1L1 8" stroke="#222" strokeWidth="1.800" /></svg>
    </BarButton>
  </>
);

const GREEN = "#2fcf2f";
const MAROON = "#6e2a2a";

function CutsDock() {
  return (
    <>
      <DockTitle><span>Cuts / Layers</span><TitleButtons /></DockTitle>
      <CutsArea>
        <TableFrame>
          <CutTable>
            <colgroup>
              {[27, 40, 74, 63, 49, 38, 68].map((w, i) => <col key={i} width={w} />)}
            </colgroup>
            <thead>
              <tr><th>&nbsp;#</th><th>Layer</th><th>Mode</th><th>Spd/Pwr</th><th>Output</th><th>Show</th><th>Air</th></tr>
            </thead>
            <tbody>
              <tr>
                <Cell>C00</Cell>
                <Cell $flush><LayerChip type="button">00</LayerChip></Cell>
                <Cell $flush><Select label="Mode" value="Line" ui h={22} bg="#e4e4e4" /></Cell>
                <Cell>30.0 / 10.0</Cell>
                <Cell $mid><Switch type="checkbox" defaultChecked $c={GREEN} aria-label="Output" /></Cell>
                <Cell $mid><Switch type="checkbox" defaultChecked $c={GREEN} aria-label="Show" /></Cell>
                <Cell $mid><Switch type="checkbox" defaultChecked $c={GREEN} aria-label="Air" /></Cell>
              </tr>
            </tbody>
          </CutTable>
        </TableFrame>
        <SideStack>
          <SquareButton type="button" aria-label="Move up"><I s={11}>{icons.up}</I></SquareButton>
          <SquareButton type="button" aria-label="Move down"><I s={11}>{icons.down}</I></SquareButton>
          <SquareButton type="button" aria-label="Delete layer" $top={23}><I s={16}>{icons.trash}</I></SquareButton>
          <SquareButton type="button" aria-label="Send right" $top={22}><I s={11}>{icons.right}</I></SquareButton>
          <SquareButton type="button" aria-label="Send left"><I s={11}>{icons.left}</I></SquareButton>
        </SideStack>
      </CutsArea>
      <LayerSettings>
        <SettingsGrid>
          <span>Layer Color</span>
          <ColorBar type="button" aria-label="Layer Color" />
          <span>Speed (mm/s)</span>
          <Field><NumberBox $w={48} $right defaultValue="30.0" aria-label="Speed" /><Spin /></Field>
          <span>Pass Count</span>
          <Field><NumberBox $w={44} $right defaultValue="1" aria-label="Pass Count" /><Spin /></Field>
          <span>Power Max (%)</span>
          <Field><NumberBox $w={48} $right defaultValue="10.00" aria-label="Power Max" /><Spin /></Field>
        </SettingsGrid>
        <TabStrip $over>
          <Tab type="button" $active $w={97}>Cuts / Layers</Tab>
          <Tab type="button" $w={44}>Move</Tab>
          <Tab type="button" $w={101}>Camera Control</Tab>
          <Tab type="button" $w={93}>Variable Text</Tab>
          <TabLine />
        </TabStrip>
      </LayerSettings>
    </>
  );
}

function LaserDock() {
  return (
    <>
      <DockTitle><span>Laser</span><TitleButtons /></DockTitle>
      <LaserBody>
        <Ready>Ready</Ready>
        <ButtonRow $cols="1fr 1fr 1fr" $mt={0}>
          <PushButton type="button"><I s={16}>{icons.pause}</I>Pause</PushButton>
          <PushButton type="button"><I s={16}>{icons.stop}</I>Stop</PushButton>
          <PushButton type="button"><I s={14}>{icons.play}</I>Start</PushButton>
        </ButtonRow>
        <ButtonRow $cols="repeat(4, 1fr)">
          <Marked><PushButton type="button" $h={22}><I s={16}>{icons.frameRect}</I>Frame</PushButton></Marked>
          <PushButton type="button" $h={22}><I s={16}>{icons.frameCircle}</I>Frame</PushButton>
          <PushButton type="button" $h={22}>Save GCode</PushButton>
          <PushButton type="button" $h={22}>Run GCode</PushButton>
        </ButtonRow>
        <ButtonRow $cols="91px 91px 1fr 93px" $gap={7}>
          <PushButton type="button"><I s={16}>{icons.home}</I>Home</PushButton>
          <PushButton type="button">Go to Origin</PushButton>
          <FieldName>Start From:</FieldName>
          <Select label="Start From" value="Current Position" color="#400" h={20} />
        </ButtonRow>
        <Options>
          <SwitchColumn>
            <SwitchLabel><Switch type="checkbox" $c={MAROON} />Enable Rotary</SwitchLabel>
            <SwitchLabel><Switch type="checkbox" $c={MAROON} />Cut Selected Graphics</SwitchLabel>
            <SwitchLabel $dim><Switch type="checkbox" $c="#808080" />Use Selection Origin</SwitchLabel>
            <SwitchLabel><Switch type="checkbox" defaultChecked $c={GREEN} />Optimize Cut Path</SwitchLabel>
          </SwitchColumn>
          <OriginColumn>
            <OriginRow>
              <span>Job Origin</span>
              <OriginFrame>
                <RadioGrid $gap={17} $row={3}>
                  {Array.from({ length: 9 }, (_, i) => (
                    <Radio key={i} type="radio" name="job-origin" defaultChecked={i === 0} aria-label={`Job origin ${i + 1}`} />
                  ))}
                </RadioGrid>
              </OriginFrame>
            </OriginRow>
            <PushButton type="button"><I s={14}>{icons.lastPos}</I>Show Last Position</PushButton>
            <PushButton type="button">Optimization Settings</PushButton>
          </OriginColumn>
        </Options>
        <ButtonRow $cols="69px 1fr 1fr" $gap={6}>
          <PushButton type="button">Devices</PushButton>
          <Select label="Port" value="COM3" />
          <Select label="Device" value="xTool D1" />
        </ButtonRow>
      </LaserBody>
      <BottomTabs>
        <Tab type="button" $active $w={52}>Laser</Tab>
        <Tab type="button" $w={58}>Library</Tab>
        <TabLine />
      </BottomTabs>
    </>
  );
}

/* ---------- palette data ---------- */

const colors: [string, string, boolean?][] = [
  ["00", "#000000", true], ["01", "#0000ff", true], ["02", "#ff0000", true], ["03", "#00e000"], ["04", "#d0d000"],
  ["05", "#ff8000"], ["06", "#00e0e0"], ["07", "#ff00ff", true], ["08", "#b4b4b4"], ["09", "#0000a0", true],
  ["10", "#a00000", true], ["11", "#00a000", true], ["12", "#a0a000"], ["13", "#c08000"], ["14", "#00a0ff", true],
  ["15", "#a000a0", true], ["16", "#808080"], ["17", "#7d87b9"], ["18", "#bb7784"], ["19", "#4a6fe3", true],
  ["20", "#d33f6a", true], ["21", "#8cd78c"], ["22", "#f0b98d"], ["23", "#f6c4e1"], ["24", "#fa9ed4"],
  ["25", "#500a78", true], ["26", "#b45a00", true], ["27", "#004754", true], ["28", "#86fa88"], ["29", "#ffdb66"],
];

const SmallText = styled.div`
  display: contents;
  font-size: 12px;
`;

export default function App() {
  return (
    <Window>
      <Global />
      <TitleBar>
        <svg width="15" height="15" viewBox="0 0 15 15" aria-hidden="true">
          <path d="M0 0h15v15H0z" fill="#8c1a22" />
          <path d="M0 6C3 1 10 0 14 4l-3 0c2 1 3 3 3 5-2-3-6-4-9-2 4 0 6 3 5 8H7c0-3-2-5-7-4z" fill="#fff" />
          <path d="M2 8c3-4 7-4 10-2" fill="none" stroke="#8c1a22" />
        </svg>
        <AppTitle>LightBurn - LightBurn 1.0.04</AppTitle>
        <CaptionButton type="button" aria-label="Minimize"><svg width="10" height="10"><path d="M0 5.500h9" stroke="#222" /></svg></CaptionButton>
        <CaptionButton type="button" aria-label="Restore"><svg width="10" height="10" fill="none" stroke="#222"><path d="M.5 2.500h7v7h-7zM2.500 2.500v-2h7v7h-2" /></svg></CaptionButton>
        <CaptionButton type="button" aria-label="Close"><svg width="11" height="11"><path d="M.5.5l10 10M10.500.5l-10 10" stroke="#222" /></svg></CaptionButton>
      </TitleBar>
      <MenuBar>
        {["File", "Edit", "Tools", "Arrange", "Window", "Language", "Help"].map((m) => (
          <MenuLink key={m} href="#">{m}</MenuLink>
        ))}
      </MenuBar>

      <ToolRow>
        <Handle />
        <ToolList items={mainTools} />
        <VRule $strong />
        <Handle />
        <ToolList items={arrangeTools} />
      </ToolRow>

      <SmallText>
        <NumericRow>
          <Cluster>
            <Handle />
            <Pair>
              <NumberField label="XPos" value="85.000" w={55} nameW={24} unit="mm" />
              <NumberField label="YPos" value="93.000" w={55} nameW={24} unit="mm" />
            </Pair>
            <LockButton type="button" aria-label="Lock aspect ratio"><I s={20}>{icons.lock}</I></LockButton>
            <Pair>
              <NumberField label="Width" value="80.000" w={55} nameW={35} unit="mm" />
              <NumberField label="Height" value="60.000" w={55} nameW={35} unit="mm" />
            </Pair>
            <Pair $ml={9}>
              <NumberField label="Width percent" hideLabel value="100.000" w={49} unit="%" />
              <NumberField label="Height percent" hideLabel value="100.000" w={49} unit="%" />
            </Pair>
            <RadioGrid $ml={3}>
              {Array.from({ length: 9 }, (_, i) => (
                <Radio key={i} type="radio" name="anchor" defaultChecked={i === 4} aria-label={`Anchor ${i + 1}`} />
              ))}
            </RadioGrid>
            <Pair $ml={4}><NumberField label="Rotate" value="0.00" w={47} nameW={33} /></Pair>
            <UnitButton type="button">mm</UnitButton>
          </Cluster>
          <VRule $strong />
          <Cluster>
            <Handle />
            <Pair $gap={2}>
              <Field $dim>
                <FieldName $w={23}>Font</FieldName>
                <Select label="Font" value="MS Shell Dlg 2" w={198} bg="#efefef" color="#777" />
                <Pair $ml={3}><NumberField dim label="Height" value="25.00" nameW={34} w={44} /></Pair>
              </Field>
              <SwitchRow>
                <SwitchLabel $dim><Switch type="checkbox" $c="#808080" />Bold</SwitchLabel>
                <SwitchLabel $dim><Switch type="checkbox" $c="#808080" />Italic</SwitchLabel>
                <SwitchLabel $dim><Switch type="checkbox" $c="#808080" />Upper Case</SwitchLabel>
                <SwitchLabel $dim><Switch type="checkbox" defaultChecked $c="#808080" />Welded</SwitchLabel>
              </SwitchRow>
            </Pair>
            <Pair $ml={12} $gap={6}>
              <NumberField dim label="HSpace" value="0.00" nameW={36} w={43} />
              <NumberField dim label="VSpace" value="0.00" nameW={36} w={43} />
            </Pair>
            <Pair $ml={2} $gap={2}>
              <Field $dim><FieldName $w={39}>Align X</FieldName><Select small label="Align X" value="Middle" w={58} bg="#cbcbcb" color="#777" /></Field>
              <Field $dim><FieldName $w={39}>Align Y</FieldName><Select small label="Align Y" value="Middle" w={58} bg="#cbcbcb" color="#777" /></Field>
            </Pair>
            <Pair $ml={2} $gap={2}>
              <Select small label="Text layout" value="Normal" w={110} bg="#cbcbcb" color="#777" />
              <NumberField dim label="Offset" value="0" nameW={34} w={57} />
            </Pair>
          </Cluster>
        </NumericRow>
      </SmallText>

      <Body>
        <SideTools>
          <Handle $flat />
          <SideList items={drawTools} h={226} active="square" />
          <HRule $full />
          <Handle $flat />
          <SideList items={[["offset", "Offset"]]} h={26} />
          <HRule />
          <SideList items={[["weld", "Weld"], ["union", "Union"], ["subtract", "Subtract"], ["intersect", "Intersect"]]} h={94} />
          <HRule />
          <SideList items={[["grid9", "Grid array"], ["ring", "Circular array"]]} h={50} />
          <HRule />
          <SideList items={[["nodeEdit", "Start point"], ["fillet", "Fillet"]]} h={46} />
          <RadiusBlock>
            Radius:
            <Field $dim><NumberBox $w={32} $plain defaultValue="10.0" aria-label="Radius" /><Spin dim /></Field>
          </RadiusBlock>
        </SideTools>
        <Stage><WorkArea /></Stage>
        <Dock>
          <CutsDock />
          <LaserDock />
        </Dock>
      </Body>

      <Palette>
        <Handle />
        <Swatches>
          {colors.map(([n, bg, light], i) => (
            <Swatch key={n} type="button" $bg={bg} $light={light} $on={i === 0}>{n}</Swatch>
          ))}
        </Swatches>
        <VRule />
        <TemplateSwatches>
          <Swatch type="button" $bg="#f36926">T1</Swatch>
          <Swatch type="button" $bg="#0c96d9" $light>T2</Swatch>
        </TemplateSwatches>
      </Palette>
      <StatusBar>
        <StatusText>x: 557.00,  y: 390.00 mm   w: 0.00,   h: 0.00</StatusText>
        <VRule />
      </StatusBar>
    </Window>
  );
}
